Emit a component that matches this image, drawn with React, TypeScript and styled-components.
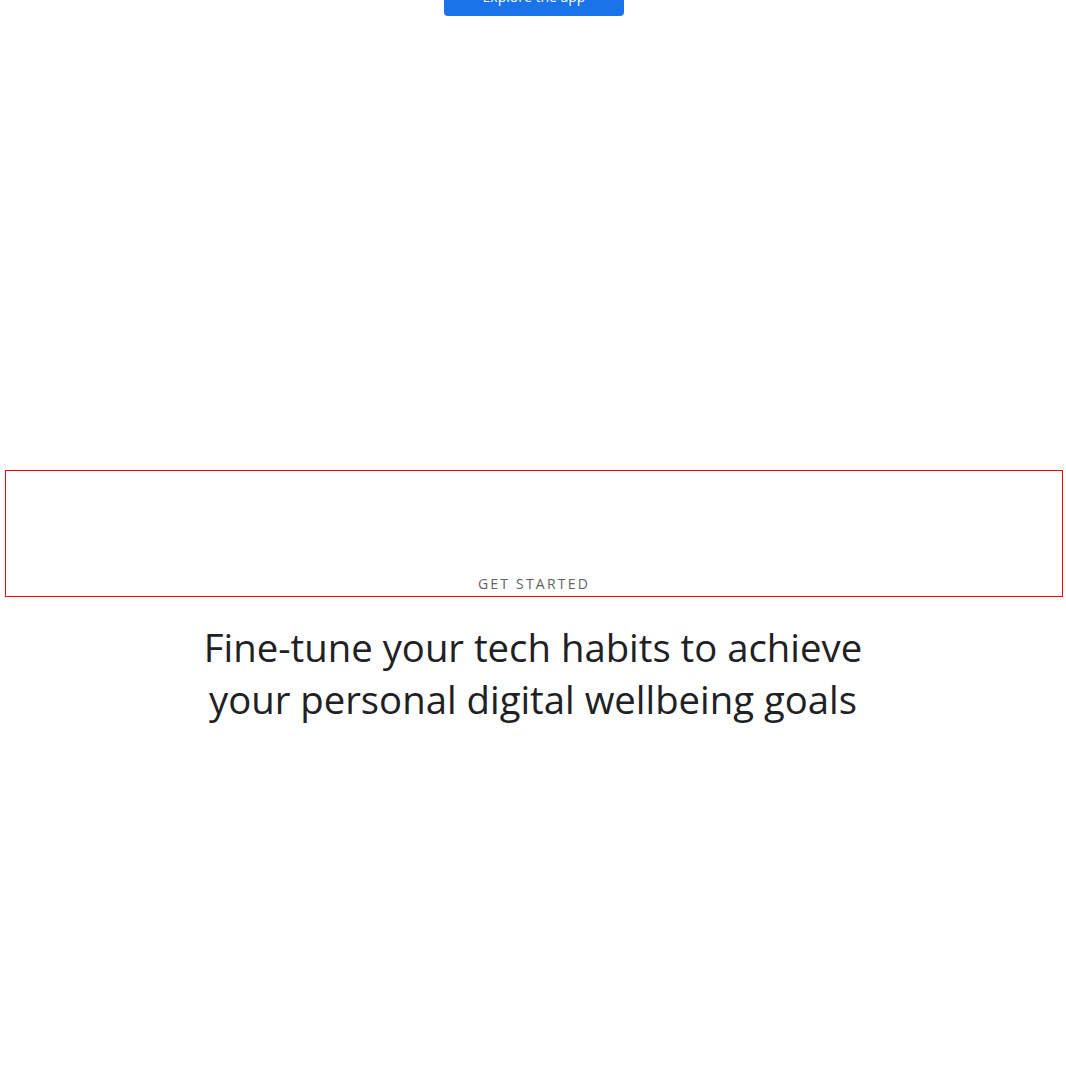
import React from 'react';
import styled, { createGlobalStyle } from 'styled-components';

const GlobalStyle = createGlobalStyle`
  html, body {
    margin: 0;
    padding: 0;
    background: #fff;
    font-family: "Open Sans", "Liberation Sans", sans-serif;
    overflow: hidden;
  }
`;

const Page = styled.main`
  display: flex;
  flex-direction: column;
  align-items: center;
  min-height: 1066px;
`;

const TopBar = styled.div`
  display: flex;
  justify-content: center;
  margin: -24px 0 0 2px;
  height: 40px;
`;

const PrimaryButton = styled.button`
  width: 180px;
  height: 40px;
  border: none;
  border-radius: 4px;
  background-color: #1a73e8;
  color: #fff;
  font-family: inherit;
  font-size: 14px;
  font-weight: 500;
  cursor: pointer;
`;

const Section = styled.section`
  align-self: stretch;
  margin: 454px 3px 0 5px;
  height: 127px;
  box-sizing: border-box;
  border: 1px solid #ff0000;
  display: flex;
  flex-direction: column;
  justify-content: flex-end;
  align-items: center;
  padding-bottom: 3px;
`;

const Eyebrow = styled.span`
  font-size: 14px;
  letter-spacing: 2.2px;
  color: #5f6368;
  text-transform: uppercase;
`;

const Headline = styled.h1`
  margin: 24px 0 0;
  font-size: 38.3px;
  font-weight: 400;
  line-height: 52px;
  color: #202124;
  text-align: center;
`;

const App: React.FC = () => {
  return (
    <>
      <GlobalStyle />
      <Page>
        <TopBar>
          <PrimaryButton>Explore the app</PrimaryButton>
        </TopBar>
        <Section>
          <Eyebrow>Get started</Eyebrow>
        </Section>
        <Headline>
          Fine-tune your tech habits to achieve
          <br />
          your personal digital wellbeing goals
        </Headline>
      </Page>
    </>
  );
};

export default App;
